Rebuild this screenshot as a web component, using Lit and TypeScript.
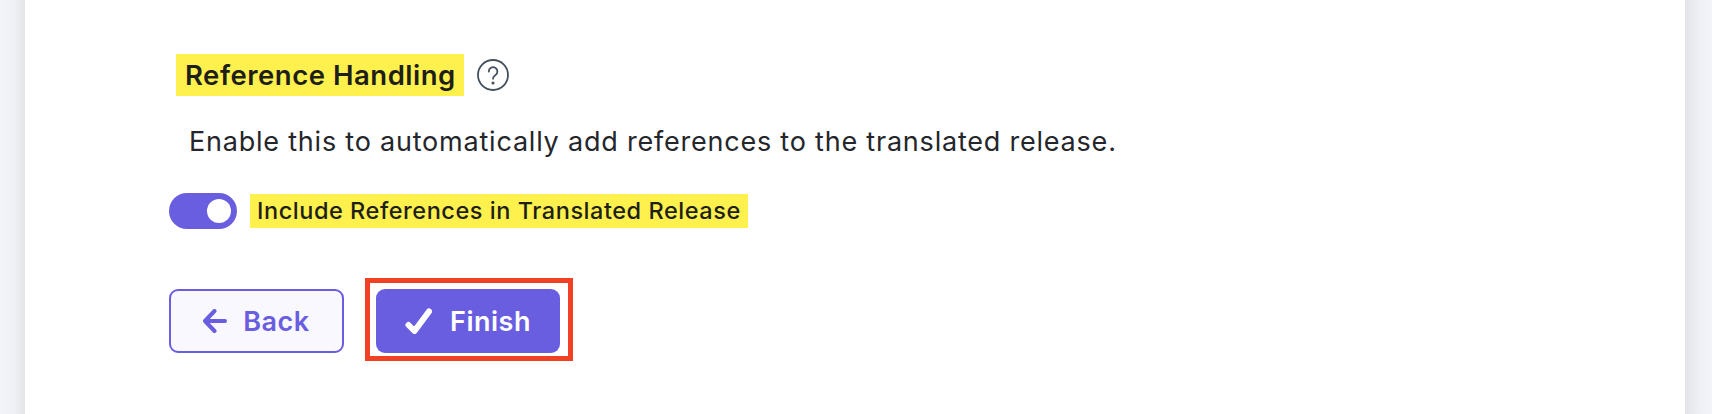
import { LitElement, html, css } from "lit";
import { customElement } from "lit/decorators.js";

@customElement("app-root")
export class AppRoot extends LitElement {
  static styles = css`
    :host {
      display: block;
      width: 1712px;
      height: 414px;
      overflow: hidden;
      font-family: Inter, "Liberation Sans", sans-serif;
    }
    .shell {
      height: 414px;
      display: flex;
      background: linear-gradient(90deg, #f2f4f9 0, #f0f1f6 14px, #e3e4e8 25px, #e3e4e8 1685px, #f0f1f6 1700px, #f2f4f9 1712px);
      padding: 0 27px 0 25px;
      box-sizing: border-box;
    }
    .card {
      flex: 1;
      background: #fff;
      padding: 54px 0 0 144px;
      box-sizing: border-box;
    }
    .head {
      display: flex;
      align-items: center;
      gap: 13px;
      margin-left: 7px;
    }
    .title {
      margin: 0;
      background: #fef14e;
      color: #1f1f1a;
      font-size: 27.5px;
      font-weight: 600;
      line-height: 42px;
      letter-spacing: 0.52px;
      padding: 0 8px 0 9px;
    }
    .q { width: 32px; height: 32px; display: block; }
    .desc {
      margin: 28px 0 0 20px;
      font-size: 27px;
      line-height: 36px;
      color: #24262b;
      letter-spacing: 0.785px;
    }
    .toggle-row {
      margin-top: 33px;
      display: flex;
      align-items: center;
      gap: 13px;
    }
    .toggle {
      width: 68px;
      height: 36px;
      border-radius: 18px;
      background: #6a5ee0;
      display: flex;
      align-items: center;
      justify-content: flex-end;
      padding: 0 6px;
      box-sizing: border-box;
    }
    .knob { width: 24px; height: 24px; border-radius: 50%; background: #fff; }
    .label {
      background: #fef14e;
      color: #1f1f1a;
      font-size: 23.500px;
      font-weight: 450;
      line-height: 34px;
      letter-spacing: 0.545px;
      padding: 0 7px 0 7px;
    }
    .actions {
      margin-top: 60px;
      display: flex;
      align-items: center;
      gap: 32px;
    }
    .btn {
      height: 64px;
      border-radius: 9px;
      display: flex;
      align-items: center;
      justify-content: center;
      font-family: inherit;
      font-size: 27px;
      font-weight: 600;
      letter-spacing: 0.5px;
      box-sizing: border-box;
      padding: 0;
    }
    .back {
      width: 175px;
      gap: 16px;
      background: #f9f8fe;
      border: 2px solid #6a5ee0;
      color: #6a5ee0;
    }
    .finish-wrap { position: relative; }
    .finish {
      width: 184px;
      gap: 18px;
      background: #6a5ee0;
      border: 0;
      color: #fff;
    }
    .mark {
      position: absolute;
      left: -11px;
      top: -11px;
      width: 208px;
      height: 83px;
      border: 5px solid #f04125;
      box-sizing: border-box;
      pointer-events: none;
    }
    .arrow { width: 24px; height: 24px; display: block; }
    .check { width: 27px; height: 26px; display: block; }
  `;

  render() {
    return html`
      <div class="shell">
        <main class="card">
          <div class="head">
            <h2 class="title">Reference Handling</h2>
            <svg class="q" viewBox="0 0 32 32" fill="none" stroke="#44505f" stroke-width="1.800" stroke-linecap="round">
              <circle cx="16" cy="16" r="15"></circle>
              <path d="M11.800 12.500a4.300 4.300 0 1 1 6.500 3.700c-1.500 1-2.300 1.800-2.300 3.500"></path>
              <circle cx="16" cy="24" r=".7" fill="#44505f"></circle>
            </svg>
          </div>
          <p class="desc">Enable this to automatically add references to the translated release.</p>
          <div class="toggle-row">
            <div class="toggle"><div class="knob"></div></div>
            <span class="label">Include References in Translated Release</span>
          </div>
          <div class="actions">
            <button class="btn back">
              <svg class="arrow" viewBox="0 0 24 24" fill="none" stroke="currentColor" stroke-width="4" stroke-linecap="round" stroke-linejoin="round">
                <path d="M22 12H2.500M11.500 2 2 12l9.500 10"></path>
              </svg>
              Back
            </button>
            <div class="finish-wrap">
              <button class="btn finish">
                <svg class="check" viewBox="0 0 27 26" fill="none" stroke="currentColor" stroke-width="6" stroke-linecap="round" stroke-linejoin="round">
                  <path d="M3.500 17 9.500 23 24 3.500"></path>
                </svg>
                Finish
              </button>
              <div class="mark"></div>
            </div>
          </div>
        </main>
      </div>
    `;
  }
}
